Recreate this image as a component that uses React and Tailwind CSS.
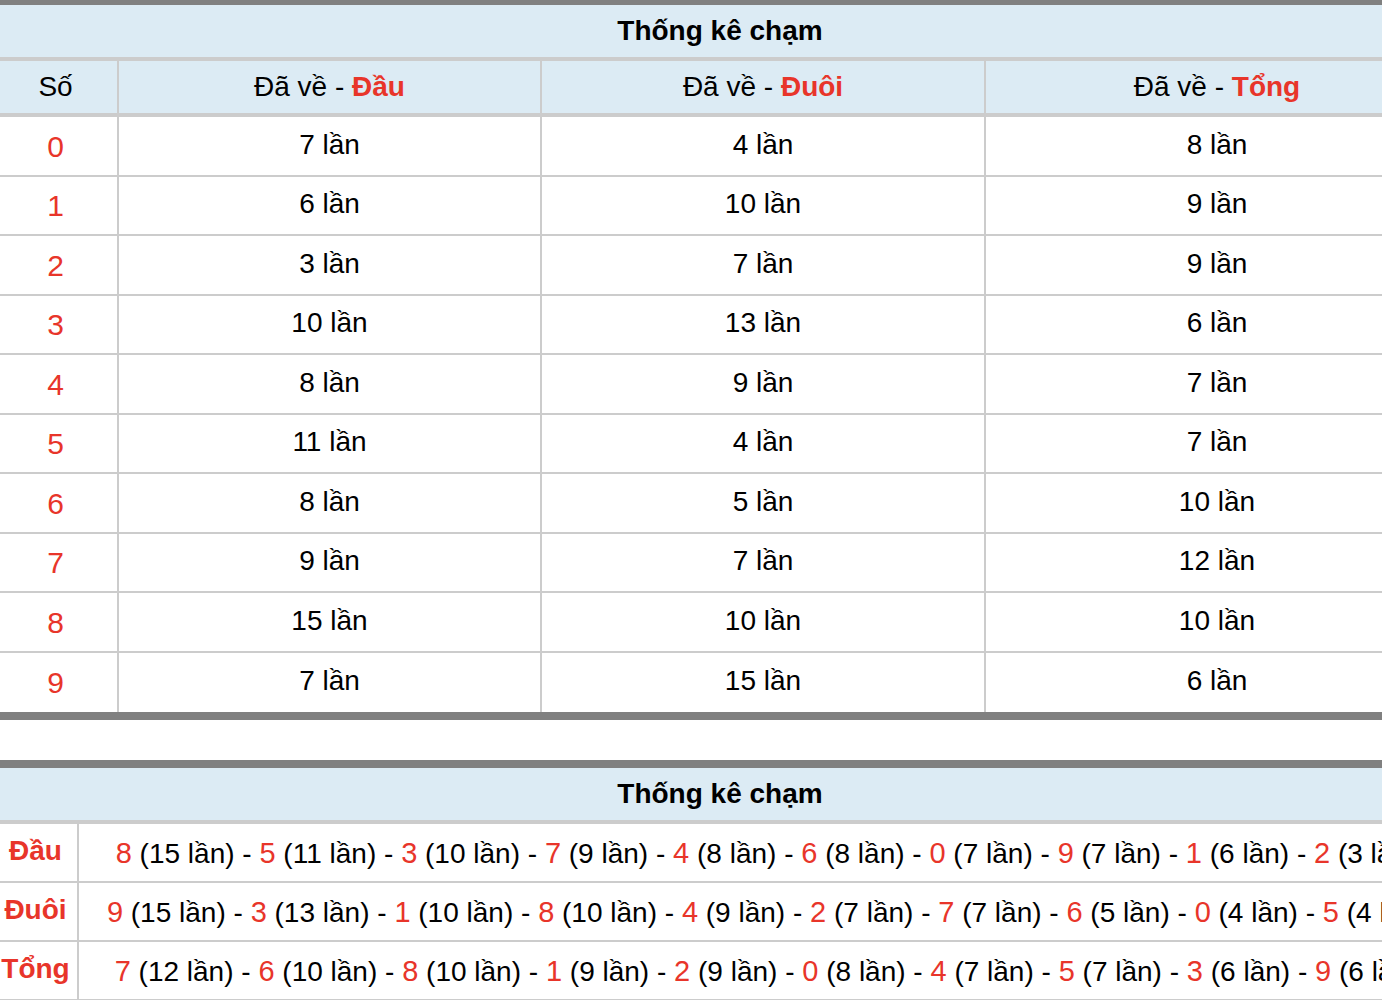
import React from 'react';

const rows = [
  { so: 0, dau: 7, duoi: 4, tong: 8 },
  { so: 1, dau: 6, duoi: 10, tong: 9 },
  { so: 2, dau: 3, duoi: 7, tong: 9 },
  { so: 3, dau: 10, duoi: 13, tong: 6 },
  { so: 4, dau: 8, duoi: 9, tong: 7 },
  { so: 5, dau: 11, duoi: 4, tong: 7 },
  { so: 6, dau: 8, duoi: 5, tong: 10 },
  { so: 7, dau: 9, duoi: 7, tong: 12 },
  { so: 8, dau: 15, duoi: 10, tong: 10 },
  { so: 9, dau: 7, duoi: 15, tong: 6 },
];

const summary = [
  { label: 'Đầu', items: [[8, 15], [5, 11], [3, 10], [7, 9], [4, 8], [6, 8], [0, 7], [9, 7], [1, 6], [2, 3]] },
  { label: 'Đuôi', items: [[9, 15], [3, 13], [1, 10], [8, 10], [4, 9], [2, 7], [7, 7], [6, 5], [0, 4], [5, 4]] },
  { label: 'Tổng', items: [[7, 12], [6, 10], [8, 10], [1, 9], [2, 9], [0, 8], [4, 7], [5, 7], [3, 6], [9, 6]] },
];

const font = { fontFamily: '"Liberation Sans", Arial, Helvetica, sans-serif' };

export default function App() {
  return (
    <div className="w-full overflow-hidden bg-white text-black" style={font}>
      <div className="w-[1448px] text-[28px] leading-none">
        {/* Bảng 1 */}
        <div className="border-t-[5px] border-b-8 border-[#808080]">
          <div className="h-[52px] bg-[#dcebf4] flex items-center justify-center font-bold pr-[8px]">
            Thống kê chạm
          </div>
          <div className="grid grid-cols-[119px_423px_444px_1fr] h-[60px] bg-[#dcebf4] border-y-4 border-[#cccccc]">
            <div className="flex items-center justify-center border-r-2 border-[#cccccc] pr-[6px]">Số</div>
            <div className="flex items-center justify-center border-r-2 border-[#cccccc]">
              Đã về -&nbsp;<span className="font-bold text-[#e8352a]">Đầu</span>
            </div>
            <div className="flex items-center justify-center border-r-2 border-[#cccccc]">
              Đã về -&nbsp;<span className="font-bold text-[#e8352a]">Đuôi</span>
            </div>
            <div className="flex items-center justify-center">
              Đã về -&nbsp;<span className="font-bold text-[#e8352a]">Tổng</span>
            </div>
          </div>
          {rows.map((r, i) => (
            <div
              key={r.so}
              className={`grid grid-cols-[119px_423px_444px_1fr] h-[59.5px] ${i < rows.length - 1 ? 'border-b-2 border-[#cccccc]' : ''}`}
            >
              <div className="flex items-center justify-center border-r-2 border-[#cccccc] text-[#e8352a] text-[30px] pt-[2px] pr-[6px]">{r.so}</div>
              <div className="flex items-center justify-center border-r-2 border-[#cccccc] pb-[2px]">{r.dau} lần</div>
              <div className="flex items-center justify-center border-r-2 border-[#cccccc] pb-[2px]">{r.duoi} lần</div>
              <div className="flex items-center justify-center pb-[2px]">{r.tong} lần</div>
            </div>
          ))}
        </div>

        <div className="h-[40px]" />

        {/* Bảng 2 */}
        <div className="border-t-8 border-[#808080]">
          <div className="h-[52px] bg-[#dcebf4] flex items-center justify-center font-bold border-b-4 border-[#cccccc] box-content pr-[8px]">
            Thống kê chạm
          </div>
          {summary.map((s) => (
            <div key={s.label} className="grid grid-cols-[79px_1fr] h-[59px] border-b-2 border-[#cccccc]">
              <div className="flex items-center justify-center border-r-2 border-[#cccccc] font-bold text-[#e8352a] pb-[3px] pr-[6px]">
                {s.label}
              </div>
              <div className="flex items-center justify-center pt-[2px] pl-[6px]">
                <span className="whitespace-nowrap">
                  {s.items.map(([n, c], j) => (
                    <React.Fragment key={j}>
                      {j > 0 ? ' - ' : ''}
                      <span className="text-[#e8352a] text-[29px]">{n}</span>
                      {` (${c} lần)`}
                    </React.Fragment>
                  ))}
                </span>
              </div>
            </div>
          ))}
        </div>
      </div>
    </div>
  );
}
